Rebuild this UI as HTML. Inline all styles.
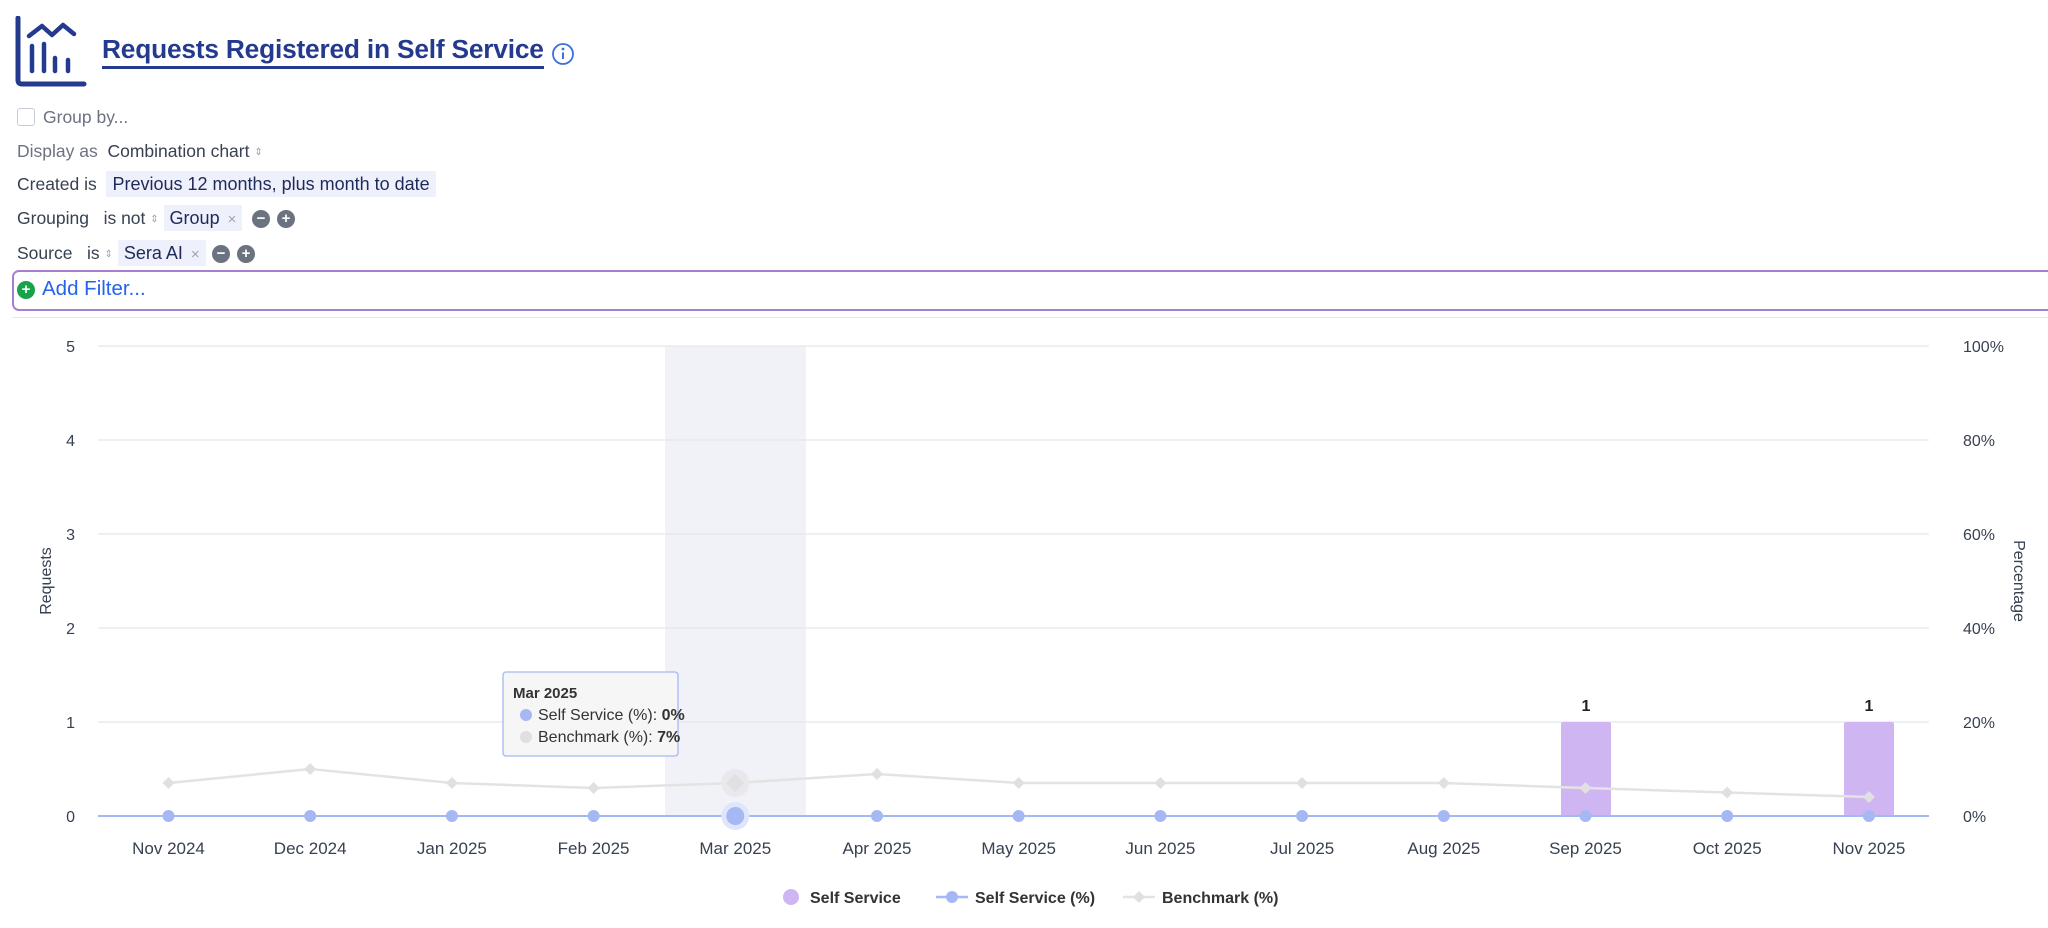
<!DOCTYPE html>
<html><head><meta charset="utf-8"><style>
body{margin:0;width:2048px;height:928px;background:#fff;font-family:"Liberation Sans",Arial,sans-serif;overflow:hidden;position:relative}
.a{position:absolute;white-space:nowrap}
.lbl{font-size:17.5px;color:#374151}
.g{color:#6b7280}
.chip{background:#eef0fb;color:#1e2a5a;padding:3px 6px;font-size:18px}
.x{color:#9ca3af;font-size:15px;margin-left:8px}
.c{position:absolute;width:18px;height:18px;border-radius:50%;background:#6b7280;color:#fff;font-size:15px;line-height:18px;text-align:center;font-weight:bold}
.ud{font-size:10px;color:#9ca3af;vertical-align:middle}
</style></head><body>
<svg class="a" style="left:14px;top:16px" width="74" height="72" viewBox="0 0 74 72">
<path d="M4 2 V64 Q4 68 8 68 H70" fill="none" stroke="#233a8f" stroke-width="5" stroke-linecap="round"/>
<path d="M15 20 L28 10 L38 19 L49 9 L60 18" fill="none" stroke="#233a8f" stroke-width="4.5" stroke-linecap="round" stroke-linejoin="round"/>
<path d="M18 30V55M30 28V55M41 42V55M54 44V55" stroke="#233a8f" stroke-width="4.5" stroke-linecap="round"/>
</svg>
<div class="a" style="left:102px;top:34px;font-size:26.3px;font-weight:bold;color:#233a8f;border-bottom:3px solid #233a8f;padding-bottom:1px;letter-spacing:-0.2px">Requests Registered in Self Service</div>
<svg class="a" style="left:551px;top:42px" width="24" height="24"><circle cx="12" cy="12" r="10" fill="none" stroke="#3b6fe0" stroke-width="1.8"/><circle cx="12" cy="7" r="1.4" fill="#3b6fe0"/><path d="M12 10.5V17" stroke="#3b6fe0" stroke-width="2"/></svg>

<div class="a" style="left:17px;top:108px;width:16px;height:16px;border:1.5px solid #c7ccd6;border-radius:3px"></div>
<div class="a lbl g" style="left:43px;top:107px">Group by...</div>
<div class="a lbl" style="left:17px;top:141px"><span class="g">Display as</span>&nbsp; Combination chart <span class="ud">⇕</span></div>
<div class="a lbl" style="left:17px;top:174px">Created is &nbsp;<span class="chip">Previous 12 months, plus month to date</span></div>
<div class="a lbl" style="left:17px;top:208px">Grouping &nbsp;&nbsp;is not <span class="ud">⇕</span> <span class="chip">Group<span class="x">×</span></span></div>
<div class="c" style="left:252px;top:210px">−</div><div class="c" style="left:277px;top:210px">+</div>
<div class="a lbl" style="left:17px;top:243px">Source &nbsp;&nbsp;is <span class="ud">⇕</span> <span class="chip">Sera AI<span class="x">×</span></span></div>
<div class="c" style="left:212px;top:245px">−</div><div class="c" style="left:237px;top:245px">+</div>
<div class="a" style="left:12px;top:270px;width:2040px;height:37px;border:2px solid #a67fd0;border-radius:7px"></div>
<div class="c" style="left:17px;top:281px;background:#16a34a">+</div>
<div class="a" style="left:42px;top:277px;font-size:20.5px;color:#2563eb">Add Filter...</div>
<div class="a" style="left:12px;top:317px;width:2036px;height:1px;background:#e5e7eb"></div>

<svg class="a" style="left:0;top:0" width="2048" height="928" font-family="Liberation Sans,Arial,sans-serif">
<rect x="665" y="346" width="141" height="470" fill="#f1f2f8"/>
<g stroke="#e5e7eb" stroke-width="1.3">
<line x1="98" x2="1929" y1="346" y2="346"/><line x1="98" x2="1929" y1="440" y2="440"/><line x1="98" x2="1929" y1="534" y2="534"/><line x1="98" x2="1929" y1="628" y2="628"/><line x1="98" x2="1929" y1="722" y2="722"/>
</g>
<g font-size="16" fill="#374151" text-anchor="end">
<text x="75" y="352">5</text><text x="75" y="446">4</text><text x="75" y="540">3</text><text x="75" y="634">2</text><text x="75" y="728">1</text><text x="75" y="822">0</text>
</g>
<g font-size="16" fill="#374151">
<text x="1963" y="352">100%</text><text x="1963" y="446">80%</text><text x="1963" y="540">60%</text><text x="1963" y="634">40%</text><text x="1963" y="728">20%</text><text x="1963" y="822">0%</text>
</g>
<text transform="translate(51,581) rotate(-90)" font-size="16" fill="#374151" text-anchor="middle">Requests</text>
<text transform="translate(2014,581) rotate(90)" font-size="16" fill="#374151" text-anchor="middle">Percentage</text>
<rect x="1561" y="722" width="50" height="94" rx="2" fill="#cfb5f2"/>
<rect x="1844" y="722" width="50" height="94" rx="2" fill="#cfb5f2"/>
<g font-size="16" font-weight="bold" fill="#222" text-anchor="middle"><text x="1586" y="711">1</text><text x="1869" y="711">1</text></g>
<line x1="98" x2="1929" y1="816" y2="816" stroke="#a5b8f3" stroke-width="2"/>
<polyline fill="none" stroke="#e3e3e3" stroke-width="2.5" points="168.5,783 310.2,769 451.9,783 593.6,788 735.3,783 877,774 1018.7,783 1160.4,783 1302.1,783 1443.8,783 1585.5,788 1727.2,792.5 1868.9,797"/>
<circle cx="735.3" cy="783" r="14" fill="#e8e8ee"/>
<g fill="#e0e0e0">
<path d="M168.5 777l6 6-6 6-6-6z"/><path d="M310.2 763l6 6-6 6-6-6z"/><path d="M451.9 777l6 6-6 6-6-6z"/><path d="M593.6 782l6 6-6 6-6-6z"/><path d="M735.3 774l9 9-9 9-9-9z"/><path d="M877 768l6 6-6 6-6-6z"/><path d="M1018.7 777l6 6-6 6-6-6z"/><path d="M1160.4 777l6 6-6 6-6-6z"/><path d="M1302.1 777l6 6-6 6-6-6z"/><path d="M1443.8 777l6 6-6 6-6-6z"/><path d="M1585.5 782l6 6-6 6-6-6z"/><path d="M1727.2 786.5l6 6-6 6-6-6z"/><path d="M1868.9 791l6 6-6 6-6-6z"/>
</g>
<circle cx="735.3" cy="816" r="14" fill="#dfe6fb"/>
<g fill="#a5b8f3">
<circle cx="168.5" cy="816" r="6"/><circle cx="310.2" cy="816" r="6"/><circle cx="451.9" cy="816" r="6"/><circle cx="593.6" cy="816" r="6"/><circle cx="735.3" cy="816" r="9"/><circle cx="877" cy="816" r="6"/><circle cx="1018.7" cy="816" r="6"/><circle cx="1160.4" cy="816" r="6"/><circle cx="1302.1" cy="816" r="6"/><circle cx="1443.8" cy="816" r="6"/><circle cx="1585.5" cy="816" r="6"/><circle cx="1727.2" cy="816" r="6"/><circle cx="1868.9" cy="816" r="6"/>
</g>
<g font-size="17" fill="#374151" text-anchor="middle">
<text x="168.5" y="854">Nov 2024</text><text x="310.2" y="854">Dec 2024</text><text x="451.9" y="854">Jan 2025</text><text x="593.6" y="854">Feb 2025</text><text x="735.3" y="854">Mar 2025</text><text x="877" y="854">Apr 2025</text><text x="1018.7" y="854">May 2025</text><text x="1160.4" y="854">Jun 2025</text><text x="1302.1" y="854">Jul 2025</text><text x="1443.8" y="854">Aug 2025</text><text x="1585.5" y="854">Sep 2025</text><text x="1727.2" y="854">Oct 2025</text><text x="1868.9" y="854">Nov 2025</text>
</g>
<rect x="503" y="672" width="175" height="84" rx="3" fill="#f6f6f7" fill-opacity="0.95" stroke="#a5b8f3" stroke-width="1.3"/>
<text x="513" y="698" font-size="15" font-weight="bold" fill="#333">Mar 2025</text>
<circle cx="526" cy="715" r="6" fill="#a5b8f3"/>
<text x="538" y="720" font-size="16" fill="#333">Self Service (%): <tspan font-weight="bold">0%</tspan></text>
<circle cx="526" cy="737" r="6" fill="#e0e0e0"/>
<text x="538" y="742" font-size="16" fill="#333">Benchmark (%): <tspan font-weight="bold">7%</tspan></text>
<circle cx="791" cy="897" r="8" fill="#cfb5f2"/>
<text x="810" y="903" font-size="16" font-weight="bold" fill="#333">Self Service</text>
<line x1="936" x2="968" y1="897" y2="897" stroke="#a5b8f3" stroke-width="2.5"/><circle cx="952" cy="897" r="6" fill="#a5b8f3"/>
<text x="975" y="903" font-size="16" font-weight="bold" fill="#333">Self Service (%)</text>
<line x1="1123" x2="1155" y1="897" y2="897" stroke="#e3e3e3" stroke-width="2.5"/><path d="M1139 891l6 6-6 6-6-6z" fill="#e0e0e0"/>
<text x="1162" y="903" font-size="16" font-weight="bold" fill="#333">Benchmark (%)</text>
</svg>
</body></html>
